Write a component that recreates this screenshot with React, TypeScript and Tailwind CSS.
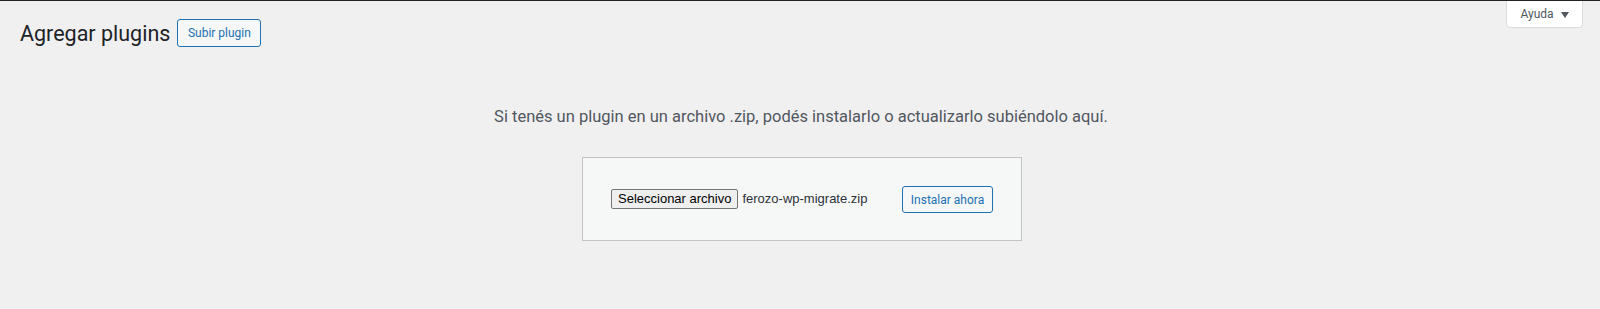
const ui = "font-['Roboto','Liberation_Sans',sans-serif]";
const arial = "font-['Liberation_Sans',Arial,sans-serif]";

function HelpTab() {
  return (
    <div className="float-right mr-[17px]">
      <button
        className={`${ui} flex h-[27px] w-[77px] items-center justify-center gap-[7px] rounded-b-[4px] border border-t-0 border-[#dcdcde] bg-white text-[12px] text-[#50575e]`}
      >
        Ayuda
        <svg width="8" height="6" viewBox="0 0 8 6" className="mt-px">
          <path d="M0 0h8L4 6z" fill="#50575e" />
        </svg>
      </button>
    </div>
  );
}

function UploadForm() {
  return (
    <div className="mt-[28px] flex justify-center pl-[4px]">
      <form className="flex h-[84px] w-[440px] items-center justify-between border border-[#c3c4c7] bg-[#f6f7f7] px-[28px]">
        <div className="flex items-center gap-[4px]">
          <span
            className={`${arial} flex h-[20px] items-center rounded-[2px] border border-[#767676] bg-[#efefef] px-[6px] text-[13px] text-black`}
          >
            Seleccionar archivo
          </span>
          <span className={`${arial} text-[13px] text-[#2c3338]`}>ferozo-wp-migrate.zip</span>
        </div>
        <button
          type="button"
          className={`${ui} mt-[1px] h-[27px] w-[91px] rounded-[3px] border border-[#2271b1] bg-[#f6f7f7] text-[12px] text-[#2271b1]`}
        >
          Instalar ahora
        </button>
      </form>
    </div>
  );
}

export default function App() {
  return (
    <div className="min-h-screen border-t border-[#1d2327] bg-[#f0f0f1]">
      <HelpTab />
      <div className="flex items-start pl-[20px] pt-[18px]">
        <h1 className={`${ui} h-[30px] text-[21.5px] leading-[30px] font-normal text-[#1d2327]`}>
          Agregar plugins
        </h1>
        <button
          className={`${ui} ml-[7px] h-[28px] w-[84px] rounded-[3px] border border-[#2271b1] bg-[#f6f7f7] text-[12px] text-[#2271b1]`}
        >
          Subir plugin
        </button>
      </div>
      <p className={`${ui} mt-[56px] pl-[2px] text-center text-[16.5px] leading-[24px] text-[#50575e]`}>
        Si tenés un plugin en un archivo .zip, podés instalarlo o actualizarlo subiéndolo aquí.
      </p>
      <UploadForm />
    </div>
  );
}
